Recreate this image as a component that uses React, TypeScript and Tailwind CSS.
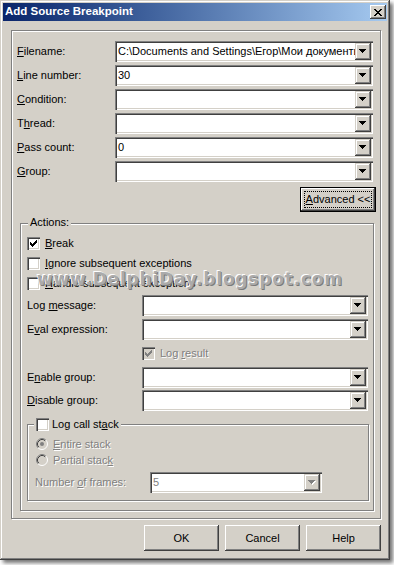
import type { ReactNode } from "react";

const FONT = "font-['Liberation_Sans',Arial,sans-serif]";
const SUNKEN =
  "shadow-[inset_1px_1px_0_#808080,inset_2px_2px_0_#404040,inset_-1px_-1px_0_#ffffff,inset_-2px_-2px_0_#d4d0c8]";
const RAISED =
  "shadow-[inset_-1px_-1px_0_#404040,inset_1px_1px_0_#ffffff,inset_-2px_-2px_0_#808080,inset_2px_2px_0_#d4d0c8]";
const DROP =
  "shadow-[inset_-1px_-1px_0_#404040,inset_1px_1px_0_#d4d0c8,inset_-2px_-2px_0_#808080,inset_2px_2px_0_#ffffff]";
const ETCHED = "border border-[#808080] shadow-[inset_1px_1px_0_#ffffff,1px_1px_0_#ffffff]";
const DIM = "text-[#808080] [text-shadow:1px_1px_0_#ffffff]";

function Arrow({ disabled }: { disabled?: boolean }) {
  return (
    <svg width="8" height="5" viewBox="0 0 8 5" shapeRendering="crispEdges">
      {disabled && <path d="M1 1H8V2H7V3H6V4H5V5H4V4H3V3H2V2H1Z" fill="#ffffff" />}
      <path d="M0 0H7V1H6V2H5V3H4V4H3V3H2V2H1V1H0Z" fill={disabled ? "#808080" : "#000000"} />
    </svg>
  );
}

function Combo({ value = "", className = "", disabled = false }: { value?: string; className?: string; disabled?: boolean }) {
  return (
    <div className={`flex h-[21px] bg-white p-[2px] ${SUNKEN} ${className}`}>
      <div
        className={`min-w-0 flex-1 overflow-hidden whitespace-nowrap pl-[1px] leading-[17px] ${
          disabled ? "text-[#808080]" : "text-black"
        }`}
      >
        {value}
      </div>
      <div className={`flex h-[17px] w-[16px] shrink-0 items-center justify-center bg-[#d4d0c8] ${DROP}`}>
        <Arrow disabled={disabled} />
      </div>
    </div>
  );
}

function Check({ checked = false, disabled = false }: { checked?: boolean; disabled?: boolean }) {
  return (
    <div className={`relative h-[13px] w-[13px] shrink-0 ${disabled ? "bg-[#d4d0c8]" : "bg-white"} ${SUNKEN}`}>
      {checked && (
        <svg className="absolute left-[3px] top-[3px]" width="7" height="7" viewBox="0 0 7 7" shapeRendering="crispEdges">
          <path
            d="M6 0H7V3H6V4H5V5H4V6H3V7H2V6H1V5H0V2H1V3H2V4H3V3H4V2H5V1H6Z"
            fill={disabled ? "#808080" : "#000000"}
          />
        </svg>
      )}
    </div>
  );
}

function Radio({ checked = false }: { checked?: boolean }) {
  return (
    <svg width="12" height="12" viewBox="0 0 12 12" className="shrink-0">
      <circle cx="6" cy="6" r="5.5" fill="#d4d0c8" />
      <path d="M2.11 9.89A5.5 5.5 0 0 1 9.89 2.11" stroke="#808080" fill="none" />
      <path d="M2.82 9.18A4.5 4.5 0 0 1 9.18 2.82" stroke="#404040" fill="none" />
      <path d="M9.89 2.11A5.5 5.5 0 0 1 2.11 9.89" stroke="#ffffff" fill="none" />
      {checked && <circle cx="6" cy="6" r="2" fill="#808080" />}
    </svg>
  );
}

function Button({ children }: { children: ReactNode }) {
  return (
    <div className={`flex h-[26px] w-[75px] items-center justify-center bg-[#d4d0c8] text-black ${RAISED}`}>
      {children}
    </div>
  );
}

function Row({ children }: { children: ReactNode }) {
  return <div className="flex h-[13px] items-center gap-[5px]">{children}</div>;
}

function Label({ children, dim = false }: { children: ReactNode; dim?: boolean }) {
  return (
    <div className="flex h-[21px] items-center">
      <span className={dim ? DIM : "text-black"}>{children}</span>
    </div>
  );
}

export default function App() {
  const fields: [ReactNode, string][] = [
    [<><u>F</u>ilename:</>, "C:\\Documents and Settings\\Егор\\Мои документы\\Borland Studio Projects\\Project1.dpr"],
    [<><u>L</u>ine number:</>, "30"],
    [<><u>C</u>ondition:</>, ""],
    [<>T<u>h</u>read:</>, ""],
    [<><u>P</u>ass count:</>, "0"],
    [<><u>G</u>roup:</>, ""],
  ];

  return (
    <div className={`h-[565px] w-[394px] bg-white text-[11px] ${FONT}`}>
      <div className="relative flex h-[560px] w-[390px] flex-col bg-[#d4d0c8] p-[3px] shadow-[inset_-1px_-1px_0_#404040,inset_1px_1px_0_#d4d0c8,inset_-2px_-2px_0_#808080,inset_2px_2px_0_#ffffff,3px_3px_4px_rgba(0,0,0,0.55)]">
        {/* title bar */}
        <div className="flex h-[18px] items-center bg-linear-to-r from-[#0a246a] to-[#a6caf0] pl-[2px] pr-[1px]">
          <span className="flex-1 text-[11.5px] font-bold text-white">Add Source Breakpoint</span>
          <div className={`flex h-[14px] w-[16px] items-center justify-center bg-[#d4d0c8] ${RAISED}`}>
            <svg width="8" height="7" viewBox="0 0 8 7" shapeRendering="crispEdges">
              <path d="M0 0H2V1H3V2H5V1H6V0H8V1H7V2H6V3H5V4H6V5H7V6H8V7H6V6H5V5H3V6H2V7H0V6H1V5H2V4H3V3H2V2H1V1H0Z" fill="#000" />
            </svg>
          </div>
        </div>

        {/* main panel */}
        <div className={`ml-[8px] mt-[9px] flex h-[489px] w-[370px] flex-col ${ETCHED}`}>
          <div className="ml-[5px] mt-[10px] grid grid-cols-[98px_258px] gap-y-[3px]">
            {fields.map(([label, value], i) => (
              <div key={i} className="contents">
                <Label>{label}</Label>
                <Combo value={value} />
              </div>
            ))}
          </div>

          <div className="mr-[4px] mt-[5px] self-end border border-black">
            <div className={`flex h-[23px] w-[74px] items-center justify-center bg-[#d4d0c8] p-[3px] ${RAISED}`}>
              <div className="flex h-full w-full items-center justify-center whitespace-nowrap border border-dotted border-black">
                <span><u>A</u>dvanced &lt;&lt;</span>
              </div>
            </div>
          </div>

          {/* actions group */}
          <div className={`relative ml-[8px] mt-[11px] flex h-[288px] w-[354px] flex-col pl-[6px] pt-[13px] ${ETCHED}`}>
            <div className="absolute left-[7px] top-[-8px] bg-[#d4d0c8] px-[2px] leading-[13px]">Actions:</div>

            <div className="flex flex-col gap-[7px]">
              <Row>
                <Check checked />
                <span><u>B</u>reak</span>
              </Row>
              <Row>
                <Check />
                <span><u>I</u>gnore subsequent exceptions</span>
              </Row>
              <Row>
                <Check />
                <span><u>H</u>andle subsequent exceptions</span>
              </Row>
            </div>

            <div className="mt-[5px] grid grid-cols-[115px_226px] gap-y-[3px]">
              <Label>Log <u>m</u>essage:</Label>
              <Combo />
              <Label>E<u>v</u>al expression:</Label>
              <Combo />
            </div>

            <div className="ml-[115px] mt-[7px]">
              <Row>
                <Check checked disabled />
                <span className={DIM}>Log <u>r</u>esult</span>
              </Row>
            </div>

            <div className="mt-[7px] grid grid-cols-[115px_226px] gap-y-[2px]">
              <Label>E<u>n</u>able group:</Label>
              <Combo />
              <Label><u>D</u>isable group:</Label>
              <Combo />
            </div>

            {/* log call stack group */}
            <div className={`relative mt-[13px] flex h-[77px] w-[342px] flex-col pt-[13px] ${ETCHED}`}>
              <div className="absolute left-[6px] top-[-7px] flex h-[13px] items-center gap-[3px] bg-[#d4d0c8] px-[2px]">
                <Check />
                <span>Log call st<u>a</u>ck</span>
              </div>
              <div className="ml-[8px] flex flex-col gap-[4px]">
                <div className="flex h-[12px] items-center gap-[5px]">
                  <Radio checked />
                  <span className={DIM}><u>E</u>ntire stack</span>
                </div>
                <div className="flex h-[12px] items-center gap-[5px]">
                  <Radio />
                  <span className={DIM}>Partial stac<u>k</u></span>
                </div>
              </div>
              <div className="ml-[7px] mt-[6px] grid grid-cols-[115px_172px]">
                <Label dim>Number <u>o</u>f frames:</Label>
                <Combo value="5" disabled />
              </div>
            </div>
          </div>
        </div>

        {/* dialog buttons */}
        <div className="mt-[6px] flex justify-end gap-[6px] pr-[6px]">
          <Button>OK</Button>
          <Button>Cancel</Button>
          <Button>Help</Button>
        </div>

        {/* blog watermark over the dialog */}
        <div className="pointer-events-none absolute left-[37px] top-[271px] whitespace-nowrap font-['DejaVu_Sans',sans-serif] text-[17px] font-bold leading-[17px] tracking-[0.8px] text-[#ababab] [text-shadow:-1px_-1px_0_#ffffff,1px_1px_0_#7a7a7a]">
          www.DelphiDay.blogspot.com
        </div>
      </div>
    </div>
  );
}
